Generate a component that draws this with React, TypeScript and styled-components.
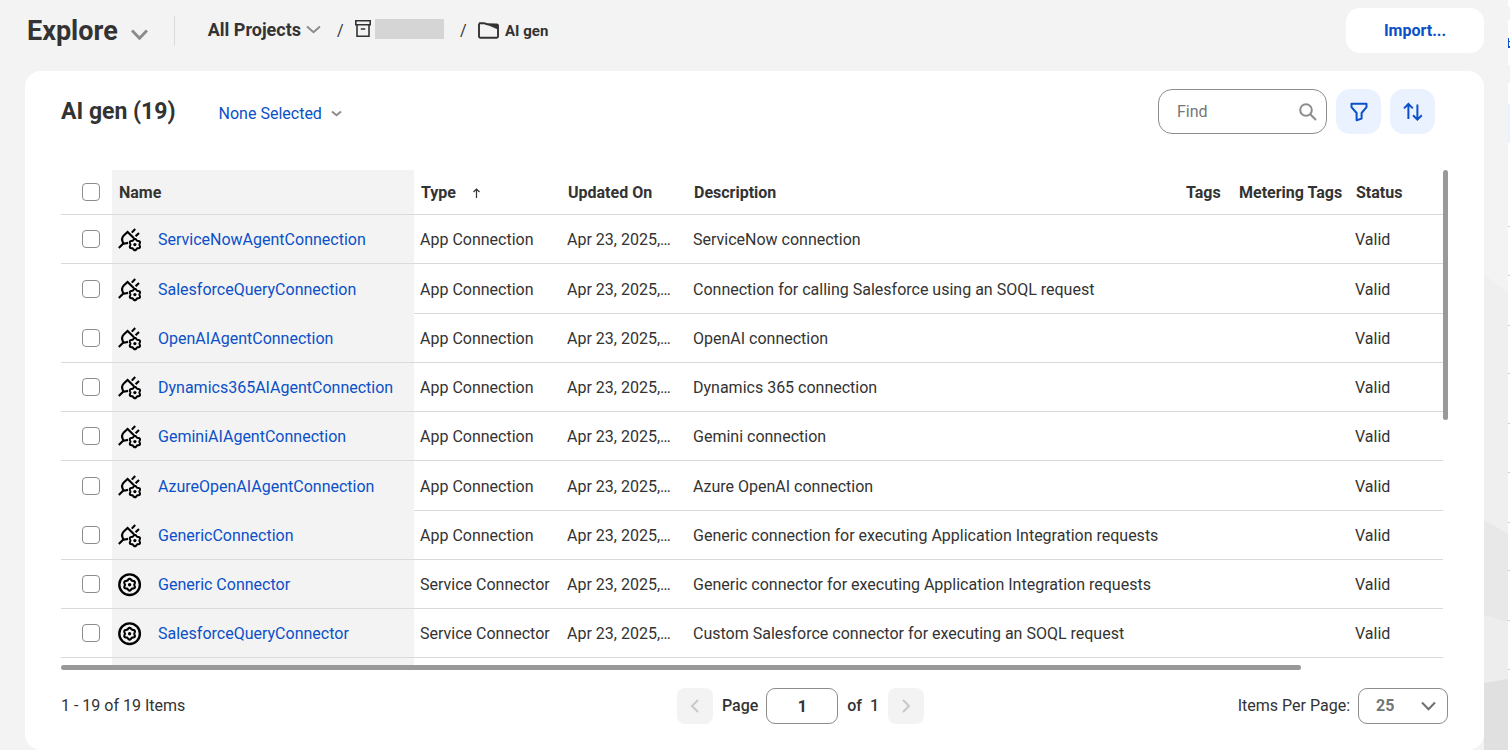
import React from "react";
import styled, { createGlobalStyle } from "styled-components";

const ink = "#333333";
const blue = "#0b50c8";
const line = "#dadada";
const muted = "#8c8c8c";

const GlobalStyle = createGlobalStyle`
  *, *::before, *::after { box-sizing: border-box; }
  body {
    margin: 0;
    background: #f3f3f3;
    color: ${ink};
    font-family: Roboto, "Liberation Sans", sans-serif;
    font-size: 16px;
    line-height: 20px;
  }
  button, input, select { font: inherit; color: inherit; }
  button { cursor: pointer; }
`;

const Page = styled.div`
  position: relative;
  display: flex;
  flex-direction: column;
  min-height: 100vh;
  padding: 0 26px 0 25px;
`;

const Backdrop = styled.svg`
  position: absolute;
  top: 0;
  right: 0;
`;

const Header = styled.header`
  display: flex;
  align-items: center;
  height: 71px;
  padding: 0 0 10px 2px;
`;

const PlainButton = styled.button`
  display: flex;
  align-items: center;
  padding: 0;
  border: 0;
  background: none;
`;

const SectionButton = styled(PlainButton)`
  align-items: baseline;
  gap: 13px;
  font-size: 27px;
  font-weight: 700;
  line-height: 32px;
`;

const Divider = styled.span`
  width: 1px;
  height: 30px;
  margin: 0 33px 0 26px;
  background: ${line};
`;

const Crumbs = styled.nav`
  display: flex;
  align-items: center;
  flex: 1;
`;

const ProjectsButton = styled(PlainButton)`
  gap: 5px;
  font-size: 18px;
  font-weight: 700;
  padding-bottom: 2px;
`;

const Slash = styled.span`
  width: 6px;
  margin: 0 12px 0 16px;
`;

const ProjectLink = styled.a`
  display: flex;
  align-items: center;
  gap: 4px;
  padding-bottom: 4px;
`;

const ProjectName = styled.span`
  width: 69px;
  height: 20px;
  background: #d5d5d5;
`;

const FolderLink = styled.a`
  display: flex;
  align-items: center;
  gap: 6px;
  color: ${ink};
  font-size: 15px;
  font-weight: 700;
  text-decoration: none;
`;

const ImportButton = styled.button`
  width: 138px;
  height: 45px;
  border: 0;
  border-radius: 14px;
  background: #fff;
  color: ${blue};
  font-weight: 700;
`;

const Card = styled.main`
  position: relative;
  flex: 1;
  padding: 18px 36px 26px;
  border-radius: 16px;
  background: #fff;
`;

const Toolbar = styled.div`
  display: flex;
  align-items: center;
  gap: 9px;
  padding-right: 13px;
  margin-bottom: 36px;
`;

const Title = styled.h1`
  margin: 0 34px 0 0;
  font-size: 23px;
  font-weight: 700;
  line-height: 28px;
`;

const SelectionButton = styled(PlainButton)`
  gap: 9px;
  margin-right: auto;
  padding-top: 4px;
  color: ${blue};
`;

const SearchBox = styled.label`
  display: flex;
  align-items: center;
  width: 169px;
  height: 45px;
  padding: 0 9px 0 18px;
  border: 1px solid ${muted};
  border-radius: 14px;
`;

const SearchInput = styled.input`
  flex: 1;
  min-width: 0;
  padding: 0;
  border: 0;
  outline: 0;
  background: none;
  &::placeholder { color: #767676; opacity: 1; }
`;

const ToolButton = styled.button`
  display: grid;
  place-items: center;
  width: 45px;
  height: 45px;
  padding: 0;
  border: 0;
  border-radius: 14px;
  background: #ebf2ff;
`;

const TableFrame = styled.div`
  display: grid;
  grid-template-columns: minmax(0, 1fr) 5px;
`;

const ThumbY = styled.div`
  height: 250px;
  border-radius: 3px;
  background: #999;
`;

const ThumbX = styled.div`
  height: 5px;
  margin-right: 142px;
  border-radius: 3px;
  background: #999;
`;

const Table = styled.table`
  width: 100%;
  table-layout: fixed;
  border-collapse: separate;
  border-spacing: 0;
`;

const Col = styled.col<{ $w?: number }>`
  width: ${(p) => (p.$w ? `${p.$w}px` : "auto")};
`;

const HeadCell = styled.th<{ $shaded?: boolean }>`
  height: 45px;
  padding: 2px 0 0 7px;
  border-bottom: 1px solid ${line};
  background: ${(p) => (p.$shaded ? "#f3f3f3" : "#fff")};
  font-weight: 700;
  text-align: left;
  white-space: nowrap;
  &:first-child { padding-top: 0; }
`;

const SortArrow = styled.svg`
  margin-left: 16px;
`;

const Cell = styled.td<{ $shaded?: boolean }>`
  height: 49px;
  padding: 2px 0 0 6px;
  border-bottom: 1px solid ${line};
  background: ${(p) => (p.$shaded ? "#f3f3f3" : "#fff")};
  overflow: hidden;
  text-overflow: ellipsis;
  white-space: nowrap;
  &:first-child { padding-top: 0; }
`;

const Row = styled.tr`
  &:nth-child(4n + 2) > td { height: 50px; }
  &:nth-child(4n + 2) > td:nth-child(-n + 2) { border-bottom-color: transparent; }
`;

const TailCell = styled.td<{ $shaded?: boolean }>`
  height: 7px;
  padding: 0;
  background: ${(p) => (p.$shaded ? "#f3f3f3" : "#fff")};
`;

const Check = styled.input`
  display: block;
  appearance: none;
  width: 18px;
  height: 18px;
  margin: 0 0 0 15px;
  border: 1px solid ${muted};
  border-radius: 4px;
  background: #fff;
  &:checked { background: ${blue}; }
  th > & { margin-left: 14px; }
`;

const NameWrap = styled.div`
  display: flex;
  align-items: center;
  gap: 16px;
`;

const NameLink = styled.a`
  color: ${blue};
  text-decoration: none;
`;

const Footer = styled.footer`
  display: grid;
  grid-template-columns: 154fr auto 131fr;
  align-items: center;
  margin-top: 18px;
`;

const Pager = styled.div`
  display: flex;
  align-items: center;
  gap: 9px;
  font-weight: 500;
`;

const PagerLabel = styled.label`
  display: flex;
  align-items: center;
  gap: 8px;
`;

const StepButton = styled.button`
  display: grid;
  place-items: center;
  width: 36px;
  height: 36px;
  padding: 0;
  border: 0;
  border-radius: 8px;
  background: #f3f3f3;
`;

const PageInput = styled.input`
  width: 72px;
  height: 36px;
  padding: 0;
  border: 1px solid ${muted};
  border-radius: 9px;
  background: #fff;
  text-align: center;
  font-weight: 700;
`;

const PageCount = styled.span`
  display: flex;
  gap: 8px;
`;

const PerPage = styled.label`
  display: flex;
  align-items: center;
  justify-content: flex-end;
  gap: 8px;
`;

const SelectShell = styled.span`
  display: grid;
  align-items: center;
  width: 90px;
  height: 36px;
  & > * { grid-area: 1 / 1; }
  & > svg { justify-self: end; margin-right: 12px; pointer-events: none; }
`;

const PageSize = styled.select`
  appearance: none;
  width: 100%;
  height: 100%;
  padding: 0 0 0 17px;
  border: 1px solid ${muted};
  border-radius: 9px;
  background: #fff;
  color: #757575;
  font-weight: 700;
`;

function Chevron({ w, h, color, stroke }: { w: number; h: number; color: string; stroke: number }) {
  return (
    <svg width={w} height={h} viewBox={`0 0 ${w} ${h}`} fill="none" aria-hidden="true">
      <path d={`M1 1.5 L${w / 2} ${h - 1.8} L${w - 1} 1.5`} stroke={color} strokeWidth={stroke} />
    </svg>
  );
}

/* Six-lobed gear outline around a centre point. */
function gear(cx: number, cy: number, r: number) {
  const points: string[] = [];
  for (let i = 0; i < 72; i++) {
    const a = (i / 72) * Math.PI * 2;
    const d = r + r * 0.12 * Math.cos(6 * a);
    points.push(`${(cx + d * Math.sin(a)).toFixed(2)} ${(cy - d * Math.cos(a)).toFixed(2)}`);
  }
  return `M${points.join("L")}Z`;
}

function ConnectionIcon() {
  return (
    <svg width="24" height="24" viewBox="0 0 24 24" fill="none" stroke="#000" strokeWidth="2.1" aria-hidden="true">
      <path d="M.8 20 5.6 15.2M16 10.2 9.6 4 6 7.3C3.9 9.4 3.7 12.2 5 14.5l1.2 1.2 3.8-.8M13.8 4.6 17.2 1M17.6 8.3 21 4.9" />
      <path d={gear(16.9, 16.6, 5.1)} strokeWidth="2" />
      <circle cx="16.9" cy="16.6" r="1.6" fill="#000" stroke="none" />
    </svg>
  );
}

function ConnectorIcon() {
  return (
    <svg width="24" height="24" viewBox="0 0 24 24" fill="none" stroke="#000" aria-hidden="true">
      <circle cx="11.6" cy="11.7" r="10.3" strokeWidth="2.4" />
      <path d={gear(11.6, 11.7, 5.3)} strokeWidth="2.1" />
      <circle cx="11.6" cy="11.7" r="1.7" fill="#000" stroke="none" />
    </svg>
  );
}

function PageBackdrop() {
  return (
    <Backdrop width="26" height="750" viewBox="0 0 26 750" aria-hidden="true">
      <path d="M0 275 24 292V750H0Z" fill="#efefef" />
      <path d="M0 520 24 534V750H0Z" fill="#e8e8e8" />
      <path d="M0 615 24 622V750H0Z" fill="#ededed" />
      <path d="M0 683 24 679V750H0Z" fill="#e0e0e0" />
      <path d="M24 0h2v7h-2ZM24 20h2v45h-2ZM24 83h2v667h-2Z" fill="#fff" />
      <path d="M24 104h2v39h-2Z" fill="#ebf2ff" />
      <path d="M24 38h1v10h-1ZM25 41h1v1h-1ZM25 46h1v2h-1Z" fill={blue} />
      {[226, 275, 325, 373, 423, 472, 522, 570, 620, 669].map((y) => (
        <path key={y} d={`M24 ${y}h2v1h-2Z`} fill="#d0d0d0" />
      ))}
    </Backdrop>
  );
}

type Item = { name: string; type: string; description: string };

const app = "App Connection";
const service = "Service Connector";

const items: Item[] = [
  { name: "ServiceNowAgentConnection", type: app, description: "ServiceNow connection" },
  { name: "SalesforceQueryConnection", type: app, description: "Connection for calling Salesforce using an SOQL request" },
  { name: "OpenAIAgentConnection", type: app, description: "OpenAI connection" },
  { name: "Dynamics365AIAgentConnection", type: app, description: "Dynamics 365 connection" },
  { name: "GeminiAIAgentConnection", type: app, description: "Gemini connection" },
  { name: "AzureOpenAIAgentConnection", type: app, description: "Azure OpenAI connection" },
  { name: "GenericConnection", type: app, description: "Generic connection for executing Application Integration requests" },
  { name: "Generic Connector", type: service, description: "Generic connector for executing Application Integration requests" },
  { name: "SalesforceQueryConnector", type: service, description: "Custom Salesforce connector for executing an SOQL request" },
];

export default function App() {
  return (
    <>
      <GlobalStyle />
      <Page>
        <PageBackdrop />
        <Header>
          <SectionButton>
            Explore
            <Chevron w={17} h={11} color={muted} stroke={3} />
          </SectionButton>
          <Divider />
          <Crumbs aria-label="Breadcrumb">
            <ProjectsButton>
              All Projects
              <Chevron w={15} h={9} color={muted} stroke={2} />
            </ProjectsButton>
            <Slash>/</Slash>
            <ProjectLink href="#project" aria-label="Project">
              <svg width="16" height="17" viewBox="0 0 16 17" fill="none" stroke={ink} strokeWidth="1.6" aria-hidden="true">
                <path d="M.8.8h14.4v4H.8ZM2 4.8v11.4h12V4.8M5.8 9h4.4" />
              </svg>
              <ProjectName />
            </ProjectLink>
            <Slash>/</Slash>
            <FolderLink href="#folder">
              <svg width="21" height="17" viewBox="0 0 21 17" fill="none" stroke={ink} strokeWidth="1.9" strokeLinejoin="round" aria-hidden="true">
                <path d="M1 1.4V14.6q0 1.2 1.2 1.2h16.6q1.2 0 1.2-1.2V3.6q0-1.2-1.2-1.2H9.5L6.6 1.3H1" />
                <path d="M7 1.6 19.6 7V3L17 2.4Z" fill={ink} strokeWidth=".6" />
              </svg>
              AI gen
            </FolderLink>
          </Crumbs>
          <ImportButton>Import...</ImportButton>
        </Header>

        <Card>
          <Toolbar>
            <Title>AI gen (19)</Title>
            <SelectionButton>
              None Selected
              <Chevron w={11} h={7} color={muted} stroke={2} />
            </SelectionButton>
            <SearchBox>
              <SearchInput type="text" placeholder="Find" aria-label="Find" />
              <svg width="18" height="18" viewBox="0 0 18 18" fill="none" stroke={muted} strokeWidth="2" aria-hidden="true">
                <circle cx="7" cy="7" r="5.8" />
                <path d="M11.2 11.2 17 17" />
              </svg>
            </SearchBox>
            <ToolButton aria-label="Filter">
              <svg width="18" height="20" viewBox="0 0 18 20" fill="none" stroke={blue} strokeWidth="2" strokeLinejoin="round" aria-hidden="true">
                <path d="M1.5 1.8h15v3.4L11.6 11v5.6L6.6 18.2V11L1.5 5.2Z" />
              </svg>
            </ToolButton>
            <ToolButton aria-label="Sort">
              <svg width="20" height="20" viewBox="0 0 20 20" fill="none" stroke={blue} strokeWidth="2" aria-hidden="true">
                <path d="M5.4 17V2.2M1 6.4 5.4 2l4.4 4.4M14.4 2.6v14.8M10 13.2l4.4 4.4 4.4-4.4" />
              </svg>
            </ToolButton>
          </Toolbar>

          <TableFrame>
            <Table>
              <colgroup>
                <Col $w={51} />
                <Col $w={302} />
                <Col $w={147} />
                <Col $w={126} />
                <Col />
                <Col $w={53} />
                <Col $w={117} />
                <Col $w={94} />
              </colgroup>
              <thead>
                <tr>
                  <HeadCell><Check type="checkbox" aria-label="Select all" /></HeadCell>
                  <HeadCell $shaded>Name</HeadCell>
                  <HeadCell>
                    Type
                    <SortArrow width="9" height="10" viewBox="0 0 9 10" fill="none" stroke={ink} strokeWidth="1.2" aria-hidden="true">
                      <path d="M4.5 10V1M1.5 4l3-3 3 3" />
                    </SortArrow>
                  </HeadCell>
                  <HeadCell>Updated On</HeadCell>
                  <HeadCell>Description</HeadCell>
                  <HeadCell>Tags</HeadCell>
                  <HeadCell>Metering Tags</HeadCell>
                  <HeadCell>Status</HeadCell>
                </tr>
              </thead>
              <tbody>
                {items.map((item) => (
                  <Row key={item.name}>
                    <Cell><Check type="checkbox" aria-label={`Select ${item.name}`} /></Cell>
                    <Cell $shaded>
                      <NameWrap>
                        {item.type === service ? <ConnectorIcon /> : <ConnectionIcon />}
                        <NameLink href={`#${item.name}`}>{item.name}</NameLink>
                      </NameWrap>
                    </Cell>
                    <Cell>{item.type}</Cell>
                    <Cell>Apr 23, 2025,…</Cell>
                    <Cell>{item.description}</Cell>
                    <Cell />
                    <Cell />
                    <Cell>Valid</Cell>
                  </Row>
                ))}
                <tr aria-hidden="true">
                  <TailCell />
                  <TailCell $shaded />
                  <TailCell colSpan={6} />
                </tr>
              </tbody>
            </Table>
            <ThumbY />
            <ThumbX />
          </TableFrame>

          <Footer>
            <span>1 - 19 of 19 Items</span>
            <Pager>
              <StepButton disabled aria-label="Previous page">
                <svg width="9" height="14" viewBox="0 0 9 14" fill="none" stroke="#c9c9c9" strokeWidth="2" aria-hidden="true">
                  <path d="M8 1 2 7l6 6" />
                </svg>
              </StepButton>
              <PagerLabel>
                Page
                <PageInput type="text" defaultValue="1" />
              </PagerLabel>
              <PageCount><span>of</span><span>1</span></PageCount>
              <StepButton disabled aria-label="Next page">
                <svg width="9" height="14" viewBox="0 0 9 14" fill="none" stroke="#c9c9c9" strokeWidth="2" aria-hidden="true">
                  <path d="m1 1 6 6-6 6" />
                </svg>
              </StepButton>
            </Pager>
            <PerPage>
              Items Per Page:
              <SelectShell>
                <PageSize defaultValue="25">
                  <option>25</option>
                  <option>50</option>
                  <option>100</option>
                </PageSize>
                <Chevron w={15} h={10} color="#707070" stroke={2} />
              </SelectShell>
            </PerPage>
          </Footer>
        </Card>
      </Page>
    </>
  );
}
